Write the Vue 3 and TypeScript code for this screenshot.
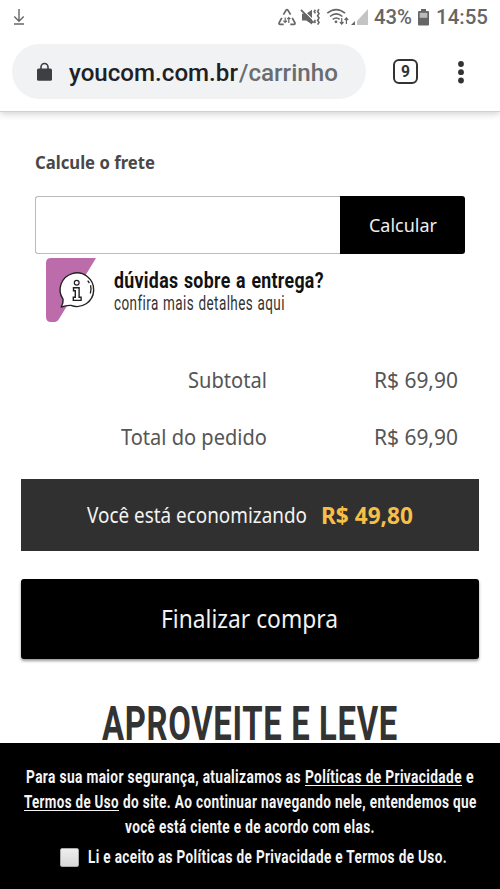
<script setup lang="ts">
import { h, type FunctionalComponent, type VNode } from 'vue'

interface FitProps {
  text: string
  width: number
  height: number
  base: number
}

// A single line of text condensed or expanded to an exact width.
const FitText: FunctionalComponent<FitProps> = (props) =>
  h('svg', { width: props.width, height: props.height, overflow: 'visible', style: { display: 'block', flex: 'none' } }, [
    h('text', {
      x: 0,
      y: props.base,
      fill: 'currentColor',
      onVnodeMounted: (vnode: VNode) => {
        const el = vnode.el as SVGTextElement
        el.setAttribute('transform', `scale(${props.width / el.getComputedTextLength()} 1)`)
      },
    }, props.text),
  ])
FitText.props = ['text', 'width', 'height', 'base']

const totals = [
  { label: 'Subtotal', labelWidth: 79, value: 'R$ 69,90' },
  { label: 'Total do pedido', labelWidth: 146, value: 'R$ 69,90' },
]
</script>

<template>
  <div class="screen">
    <header class="chrome">
      <div class="status">
        <svg class="download" width="12" height="18" viewBox="0 0 12 18" fill="none" stroke="#666" stroke-width="1.4">
          <path d="M6 1v12M1.3 8.5 6 13.2l4.7-4.7M1 16h10" />
        </svg>
        <svg class="signals" width="92" height="20" viewBox="0 0 92 20" fill="none" stroke="#666" stroke-width="1.4">
          <path d="M5.4 6.6 8.2 2q.8-1 1.6 0l2.8 4.6M3.8 9.8l-2.7 5q-.4 1.6 1 1.6h3.6M14.2 9.8l2.7 5q.4 1.6-1 1.6h-3.6" stroke-width="1.7" />
          <path d="M7.2 9.5v5M10.8 10v5M5.5 12.8l1.7 1.6 1.7-1.6M9.2 11.2l1.6-1.6 1.6 1.6" stroke-width="1.2" />
          <path d="M24 5.8h4.2l5.8-4v14.6l-5.8-4H24z" fill="#666" stroke="none" />
          <path d="m24.2 1.2 13 13" stroke="#fff" stroke-width="1.2" />
          <path d="m23 1.8 12.5 13" stroke-width="1.8" />
          <path d="M37.4 1.8l-1.2 1.8 1.2 1.8M41 1.2 39.6 3.4 41 5.6l-1.4 2.2L41 10l-1.4 2.2 1.4 2.2-1.4 2.2M37.4 11.8l-1 1.6 1 1.6" stroke-width="1.6" />
          <path d="M49.3 5.2q8.8-7.2 17.8 0M52 8.5q6.2-5.2 12.4 0M54.7 11.4q3.5-2.8 7 0" stroke-width="1.6" />
          <circle cx="58" cy="13.8" r="1.4" fill="#666" stroke="none" />
          <path d="M63.7 10v6M61.9 14l1.8 2 1.8-2M68.4 16v-6M66.6 12l1.8-2 1.8 2" stroke-width="1.2" />
          <path d="M77 13v4h-4z" fill="#666" stroke="none" />
          <path d="M90 1v16H79v-4z" fill="#c4c4c4" stroke="none" />
        </svg>
        <FitText class="clock pct" text="43%" :width="38" :height="20" :base="17" />
        <svg class="battery" width="11" height="17" viewBox="0 0 11 17">
          <path d="M3 0h5v2h2q1 0 1 1v12.5q0 1-1 1H1q-1 0-1-1V3q0-1 1-1h2z" fill="#666" />
          <path d="M1.7 3.8h7.6v5H1.7z" fill="#bbb" />
        </svg>
        <FitText class="clock" text="14:55" :width="52" :height="20" :base="17" />
      </div>
      <div class="toolbar">
        <div class="omnibox">
          <svg width="15" height="20" viewBox="0 0 15 20">
            <path d="M4 8V5a3.5 3.5 0 0 1 7 0v3" fill="none" stroke="#3c4043" stroke-width="1.6" />
            <rect y="6.5" width="15" height="12.3" rx="1.6" fill="#3c4043" />
          </svg>
          <div class="url">
            <FitText class="domain" text="youcom.com.br" :width="169" :height="30" :base="23" />
            <FitText class="path" text="/carrinho" :width="99" :height="30" :base="23" />
          </div>
        </div>
        <div class="tabs"><FitText text="9" :width="9" :height="20" :base="15.5" /></div>
        <svg class="menu" width="8" height="24" viewBox="0 0 8 24" fill="#333">
          <circle cx="4" cy="4" r="2.9" /><circle cx="4" cy="12.2" r="2.9" /><circle cx="4" cy="20.5" r="2.9" />
        </svg>
      </div>
    </header>

    <main class="page">
      <section class="shipping">
        <FitText class="label" text="Calcule o frete" :width="120" :height="24" :base="18" />
        <div class="form">
          <input class="zip" type="text" aria-label="Frete">
          <button class="calc" type="button"><FitText text="Calcular" :width="68" :height="26" :base="20" /></button>
        </div>
        <div class="help">
          <svg width="52" height="66" viewBox="0 0 52 66">
            <path d="M6 1h45L14 62q-1.5 3-4 3H6q-5 0-5-5V6q0-5 5-5z" fill="#bc6caa" />
            <g transform="translate(.7 .8)" stroke="#222">
              <path d="M17.4 41.5A16.8 16.8 0 1 1 25.2 47.6Q20.5 47.4 15.5 49.2 17.8 45.5 17.4 41.5z" fill="#fff" stroke-width="1.4" stroke-linejoin="round" />
              <circle cx="31" cy="25" r="2.4" fill="#fff" stroke-width="1.2" />
              <path d="M27.8 30h5.6v9.4h2v3.2h-7.8v-3.2h2v-6.4h-1.8z" fill="#fff" stroke-width="1.4" />
              <path d="M42 22.8l1.7 2.4M44.8 27.5q1.3 4-.2 8.2" fill="none" stroke-width="1.3" />
            </g>
          </svg>
          <div class="help-copy">
            <FitText class="help-title" text="dúvidas sobre a entrega?" :width="210" :height="24" :base="20" />
            <FitText class="help-link" text="confira mais detalhes aqui" :width="171" :height="22" :base="18" />
          </div>
        </div>
      </section>

      <section class="totals">
        <div v-for="row in totals" :key="row.label" class="total-row">
          <FitText :text="row.label" :width="row.labelWidth" :height="30" :base="23" />
          <FitText :text="row.value" :width="84" :height="30" :base="23" />
        </div>
      </section>

      <div class="saving">
        <FitText text="Você está economizando" :width="220" :height="30" :base="23.5" />
        <FitText class="amount" text="R$ 49,80" :width="92" :height="30" :base="23.5" />
      </div>

      <button class="checkout" type="button"><FitText text="Finalizar compra" :width="177" :height="34" :base="26.5" /></button>

      <h2 class="promo"><FitText text="APROVEITE E LEVE" :width="296" :height="42" :base="38" /></h2>
    </main>

    <footer class="cookies">
      <p class="line">
        <FitText text="Para sua maior segurança, atualizamos as" :width="275" :height="25" :base="18" />
        <a><FitText text="Políticas de Privacidade" :width="157" :height="25" :base="18" /></a>
        <FitText text="e" :width="8" :height="25" :base="18" />
      </p>
      <p class="line">
        <a><FitText text="Termos de Uso" :width="95" :height="25" :base="18" /></a>
        <FitText text="do site. Ao continuar navegando nele, entendemos que" :width="354" :height="25" :base="18" />
      </p>
      <p class="line"><FitText text="você está ciente e de acordo com elas." :width="250" :height="25" :base="18" /></p>
      <label class="accept">
        <span class="box"></span>
        <FitText text="Li e aceito as Políticas de Privacidade e Termos de Uso." :width="359" :height="25" :base="18.5" />
      </label>
    </footer>
  </div>
</template>

<style>
body { margin: 0; background: #fff; }
</style>

<style scoped>
.screen { box-sizing: border-box; width: 500px; height: 889px; overflow: hidden; display: flex; flex-direction: column; background: #fff; font-family: "Noto Sans", sans-serif; }
.chrome { flex: none; height: 111px; background: #fff; font-family: Roboto, sans-serif; border-bottom: 1px solid #d2d2d2; box-shadow: 0 2px 7px rgba(0, 0, 0, .18); }
.status { display: flex; align-items: flex-start; height: 37px; padding: 7px 12px 0 13px; box-sizing: border-box; }
.download { margin-top: 1px; }
.signals { margin-left: auto; margin-top: 1px; }
.clock { font-size: 21px; font-weight: 500; color: #666; }
.pct { margin-left: 4px; }
.battery { margin: 2px 7px 0 6px; }
.toolbar { display: flex; align-items: center; height: 55px; margin-top: 7px; padding-left: 12px; }
.omnibox { display: flex; align-items: center; box-sizing: border-box; width: 354px; height: 55px; padding-left: 25px; border-radius: 28px; background: #f0f2f4; }
.url { display: flex; margin-left: 17px; gap: 1px; padding-top: 2px; }
.domain { font-size: 24px; font-weight: 500; color: #202124; }
.path { font-size: 24px; font-weight: 500; color: #696c70; }
.tabs { box-sizing: border-box; display: flex; align-items: center; justify-content: center; width: 25px; height: 25px; margin-left: 27px; border: 2px solid #333; border-radius: 6px; color: #333; font-size: 16px; font-weight: 700; }
.menu { margin-left: 39px; }
.page { flex: 1; min-height: 0; overflow: hidden; padding: 0 21px; margin-top: 10px; }
.shipping { padding: 29px 14px 0; }
.label { font-size: 18.5px; font-weight: 700; color: #484848; }
.form { display: flex; height: 58px; margin-top: 21px; }
.zip { flex: 1; min-width: 0; box-sizing: border-box; height: 58px; margin: 0; padding: 0 10px; border: 1px solid #bbb; border-right: 0; border-radius: 3px 0 0 3px; background: #fff; outline: 0; }
.calc { display: flex; align-items: center; justify-content: center; width: 125px; padding: 0; border: 0; border-radius: 0 3px 3px 0; background: #000; color: #eee; font: 19px "Noto Sans", sans-serif; }
.help { display: flex; height: 66px; margin: 3px 0 0 10px; }
.help-copy { margin: 11px 0 0 17px; font-family: Roboto, sans-serif; word-spacing: 1px; }
.help-title { font-size: 22.5px; font-weight: 700; color: #111; letter-spacing: .4px; }
.help-link { font-size: 20px; color: #333; font-weight: 400; letter-spacing: .6px; }
.totals { margin-top: 42px; font-size: 22.5px; color: #555; }
.total-row { display: grid; grid-template-columns: 246px 84px; justify-items: end; column-gap: 107px; height: 57px; }
.saving { display: flex; align-items: center; justify-content: center; gap: 14px; box-sizing: border-box; height: 72px; padding-right: 1px; background: #303030; color: #f3f3f3; font-size: 21px; }
.amount { font-size: 24px; font-weight: 700; color: #f7bf47; }
.checkout { display: flex; align-items: center; justify-content: center; width: 100%; height: 80px; margin-top: 28px; padding: 0 1px 0 0; border: 0; border-radius: 3px; background: #000; color: #f2f2f2; box-shadow: 0 2px 3px rgba(0, 0, 0, .4); font: 24.5px "Noto Sans", sans-serif; }
.promo { display: flex; justify-content: center; margin: 43px 0 0; font-family: Roboto, sans-serif; font-size: 49px; font-weight: 700; color: #333; letter-spacing: 1px; }
.cookies { flex: none; box-sizing: border-box; height: 146px; padding-top: 22px; background: #000; color: #f5f5f5; font-family: Roboto, sans-serif; font-size: 19px; font-weight: 700; letter-spacing: .5px; }
.line { display: flex; justify-content: center; gap: 4px; height: 25px; margin: 0; }
.line a { text-decoration: none; border-bottom: 1px solid #f5f5f5; height: 20px; }
.accept { display: flex; margin: 5px 0 0 60px; gap: 9px; }
.box { box-sizing: border-box; width: 19px; height: 19px; margin-top: 3px; border: 1px solid #aaa; border-radius: 2px; background: linear-gradient(#eee, #d8d8d8); }
</style>
